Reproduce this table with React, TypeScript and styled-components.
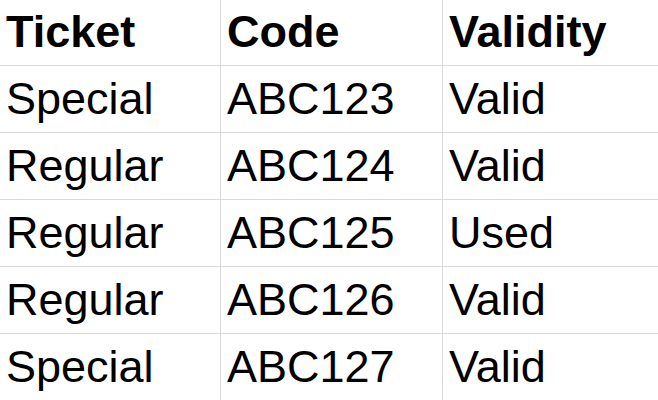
import React from "react";
import styled, { createGlobalStyle } from "styled-components";

const GlobalStyle = createGlobalStyle`
  html, body {
    margin: 0;
    padding: 0;
    background: #ffffff;
    overflow: hidden;
  }
`;

const Sheet = styled.div`
  display: grid;
  grid-template-columns: 221px 222px 1fr;
  width: 658px;
  height: 400px;
  overflow: hidden;
  font-family: "Liberation Sans", Arial, sans-serif;
  font-size: 45px;
  color: #000000;
`;

const Cell = styled.div<{ $header?: boolean; $last?: boolean }>`
  box-sizing: border-box;
  height: ${({ $header }) => ($header ? "66px" : "67px")};
  display: flex;
  align-items: flex-end;
  padding: 0 0 8px 6px;
  line-height: 50px;
  font-weight: ${({ $header }) => ($header ? 700 : 400)};
  border-bottom: 1px solid #dadada;
  border-right: ${({ $last }) => ($last ? "none" : "1px solid #dadada")};
  white-space: nowrap;
`;

const headers = ["Ticket", "Code", "Validity"];

const rows = [
  ["Special", "ABC123", "Valid"],
  ["Regular", "ABC124", "Valid"],
  ["Regular", "ABC125", "Used"],
  ["Regular", "ABC126", "Valid"],
  ["Special", "ABC127", "Valid"],
];

export default function App() {
  return (
    <>
      <GlobalStyle />
      <Sheet>
        {headers.map((h, i) => (
          <Cell key={h} $header $last={i === headers.length - 1}>
            {h}
          </Cell>
        ))}
        {rows.map((row, r) =>
          row.map((value, c) => (
            <Cell key={`${r}-${c}`} $last={c === row.length - 1}>
              {value}
            </Cell>
          ))
        )}
      </Sheet>
    </>
  );
}
